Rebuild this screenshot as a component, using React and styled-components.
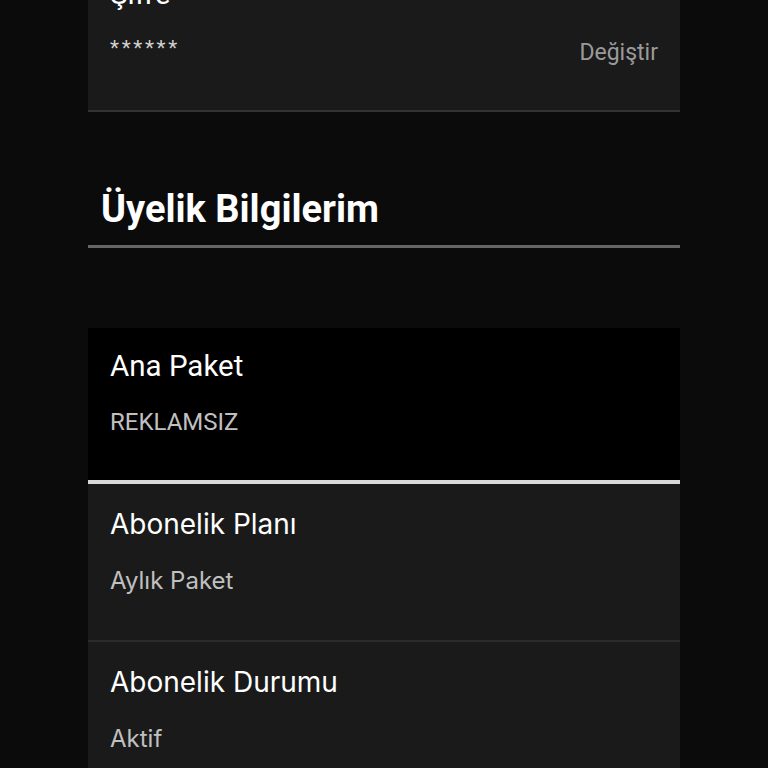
import React from "react";
import styled, { createGlobalStyle } from "styled-components";

const GlobalStyle = createGlobalStyle`
  html, body {
    margin: 0;
    padding: 0;
    background: #0b0b0b;
  }
  body {
    font-family: Roboto, "Liberation Sans", sans-serif;
    color: #fff;
    overflow: hidden;
  }
`;

const Page = styled.div`
  width: 592px;
  margin: -45px auto 0;
  display: flex;
  flex-direction: column;
`;

const Card = styled.div`
  background: ${(p) => (p.$dark ? "#000" : "#1a1a1a")};
  padding: ${(p) => p.$pad || "24px 22px 45px"};
  border-bottom: ${(p) => p.$border || "2px solid #2b2b2b"};
  display: flex;
  flex-direction: column;
  gap: ${(p) => p.$gap || "27px"};
  font-family: ${(p) =>
    p.$inter ? 'Inter, "Liberation Sans", sans-serif' : 'Roboto, "Liberation Sans", sans-serif'};
`;

const Title = styled.div`
  font-size: ${(p) => (p.$inter ? "28px" : "29.5px")};
  line-height: ${(p) => (p.$inter ? "32px" : "34px")};
  color: #fff;
`;

const Value = styled.div`
  font-size: 24px;
  line-height: 28px;
  color: #c0c0c0;
`;

const Row = styled.div`
  display: flex;
  justify-content: space-between;
  align-items: center;
  height: 28px;
`;

const Stars = styled.span`
  font-size: 21px;
  color: #d0d0d0;
  letter-spacing: 2.6px;
  margin-top: -4px;
`;

const Change = styled.span`
  font-size: 23px;
  color: #9a9a9a;
  margin-top: 4px;
`;

const Heading = styled.h2`
  margin: 75px 0 0;
  padding: 0 13px 14px;
  font-size: 38px;
  line-height: 44px;
  font-weight: 700;
  color: #fff;
  border-bottom: 3px solid #666;
`;

const Spacer = styled.div`
  height: 80px;
`;

export default function App() {
  return (
    <>
      <GlobalStyle />
      <Page>
        <Card $pad="22px 22px 46px" $border="2px solid #333" $gap="25px">
          <Title>Şifre</Title>
          <Row>
            <Stars>******</Stars>
            <Change>Değiştir</Change>
          </Row>
        </Card>

        <Heading>Üyelik Bilgilerim</Heading>
        <Spacer />

        <Card $dark $border="4px solid #d9d9d9" $pad="21px 22px 44px" $gap="25px">
          <Title>Ana Paket</Title>
          <Value>REKLAMSIZ</Value>
        </Card>
        <Card $inter>
          <Title $inter>Abonelik Planı</Title>
          <Value>Aylık Paket</Value>
        </Card>
        <Card $inter>
          <Title $inter>Abonelik Durumu</Title>
          <Value>Aktif</Value>
        </Card>
      </Page>
    </>
  );
}
